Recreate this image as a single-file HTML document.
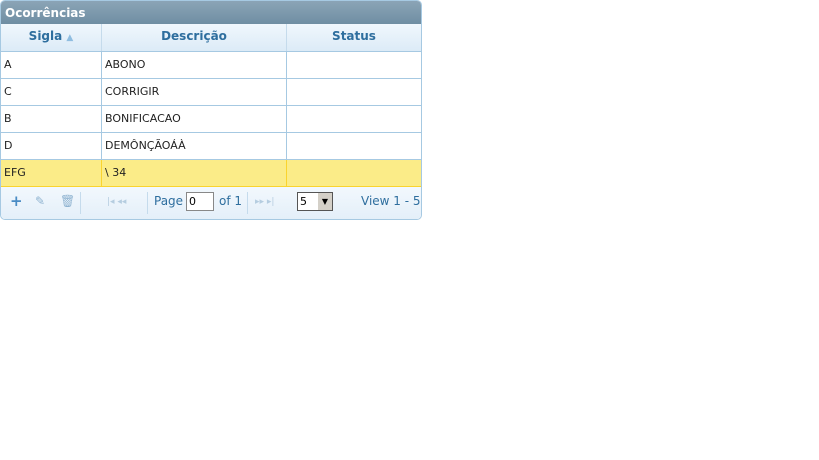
<!DOCTYPE html><html><head><style>
body{margin:0;background:#fff;font-family:"DejaVu Sans","Liberation Sans",sans-serif;}
.box{position:absolute;left:0;top:0;width:420px;height:218px;border:1px solid #a6c9e2;border-radius:5px;background:#fff;overflow:hidden}
.title{position:absolute;left:0;top:0;width:420px;height:23px;background:linear-gradient(#8ba4b6,#6f8ea3);color:#fff;font-weight:bold;font-size:12px;line-height:25px;padding-left:4px;box-sizing:border-box}
.hdr{position:absolute;top:23px;left:0;width:420px;height:27px;background:linear-gradient(#f0f7fd,#dcebf7);border-bottom:1px solid #a6c9e2}
.hdr div{position:absolute;top:0;height:27px;line-height:25px;text-align:center;color:#2e6e9e;font-weight:bold;font-size:12px;border-right:1px solid #c5dbec;box-sizing:border-box}
.row{position:absolute;left:0;width:420px;height:27px;border-bottom:1px solid #a6c9e2;box-sizing:border-box}
.row div{position:absolute;top:0;height:26px;line-height:26px;font-size:11px;color:#222;padding-left:3px;border-right:1px solid #a6c9e2;box-sizing:border-box}
.hl{background:#fbec88}.hl div{border-right-color:#fad42e!important}
.pager{position:absolute;top:186px;left:0;width:420px;height:32px;background:linear-gradient(#f2f8fd,#e4eff9);color:#2e6e9e;font-size:12px}
.pager span{position:absolute;top:7px;white-space:nowrap}
</style></head><body><div class="box">
<div class="title">Ocorrências</div>
<div class="hdr"><div style="left:0;width:101px">Sigla <span style="color:#8fbde0;font-size:9px">▲</span></div><div style="left:101px;width:185px">Descrição</div><div style="left:286px;width:134px;border:0">Status</div></div>
<div class="row" style="top:51px"><div style="left:0;width:101px">A</div><div style="left:101px;width:185px">ABONO</div></div>
<div class="row" style="top:78px"><div style="left:0;width:101px">C</div><div style="left:101px;width:185px">CORRIGIR</div></div>
<div class="row" style="top:105px"><div style="left:0;width:101px">B</div><div style="left:101px;width:185px">BONIFICACAO</div></div>
<div class="row" style="top:132px"><div style="left:0;width:101px">D</div><div style="left:101px;width:185px">DEMÔNÇÃOÁÀ</div></div>
<div class="row hl" style="top:159px;border-bottom-color:#fad42e"><div style="left:0;width:101px">EFG</div><div style="left:101px;width:185px">\ 34</div></div>
<div class="pager">
<span style="left:9px;font-weight:bold;font-size:15px;top:5px;color:#4a8cc4">+</span>
<span style="left:34px;color:#8fb3d0">✎</span>
<span style="left:59px;color:#8fb3d0">🗑</span>
<span style="left:79px;top:5px;width:1px;height:22px;background:#c5dbec"></span>
<span style="left:106px;color:#b5cde0;font-size:9px;top:10px">|◂ ◂◂</span>
<span style="left:146px;top:5px;width:1px;height:22px;background:#c5dbec"></span>
<span style="left:153px">Page</span>
<span style="left:185px;top:5px;width:28px;height:19px;border:1px solid #888;background:#fff;color:#000;font-size:11px;line-height:18px;padding-left:2px;box-sizing:border-box">0</span>
<span style="left:218px">of 1</span>
<span style="left:246px;top:5px;width:1px;height:22px;background:#c5dbec"></span>
<span style="left:254px;color:#b5cde0;font-size:9px;top:10px">▸▸ ▸|</span>
<span style="left:296px;top:5px;width:36px;height:19px;border:1px solid #555;background:#fff;color:#000;font-size:11px;line-height:18px;padding-left:2px;box-sizing:border-box">5<span style="position:absolute;right:0;top:0;width:14px;height:17px;background:#d4d0c8;font-size:8px;text-align:center;line-height:17px">▼</span></span>
<span style="left:360px;font-size:12px">View 1 - 5</span>
</div>
</div></body></html>
